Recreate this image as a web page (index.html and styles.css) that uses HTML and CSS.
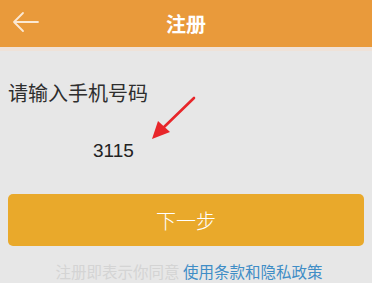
FILE: index.html
```html
<!DOCTYPE html>
<html lang="zh">
<head>
<meta charset="utf-8">
<link rel="stylesheet" href="styles.css">
</head>
<body>
<header class="topbar">
  <span class="back">
    <svg width="28" height="24" viewBox="0 0 28 24"><path d="M26 11H2M11 2L2 11L11 20" fill="none" stroke="#FBE9D4" stroke-width="1.8" stroke-linecap="round" stroke-linejoin="round"/></svg>
  </span>
  <h1 class="title">注册</h1>
</header>
<main class="content">
  <p class="label">请输入手机号码</p>
  <div class="number-row">
    <span class="number">3115</span>
    <svg class="pointer" width="50" height="46" viewBox="0 0 50 46"><path d="M45 3L14 33" stroke="#E8262A" stroke-width="2.6" stroke-linecap="round"/><polygon points="3,44 9,26 21,37" fill="#E8262A"/></svg>
  </div>
  <button class="next">下一步</button>
  <p class="terms"><span class="muted">注册即表示你同意</span> <a class="link">使用条款和隐私政策</a></p>
</main>
</body>
</html>
```
FILE: styles.css
```css
html, body {
  margin: 0;
  padding: 0;
  background: #E7E7E7;
  font-family: "Noto Sans CJK SC", "Liberation Sans", sans-serif;
  overflow: hidden;
}
.topbar {
  height: 47px;
  background: #E99A3B;
  border-bottom: 4px solid #EFE2D8;
  display: flex;
  align-items: center;
  justify-content: center;
  position: relative;
}
.back {
  position: absolute;
  left: 12px;
  top: 11px;
  display: flex;
}
.title {
  margin: 0;
  color: #FFFFFF;
  font-size: 20px;
  font-weight: 700;
  line-height: 1;
}
.content {
  padding: 0 8px;
}
.label {
  margin: 0;
  padding-top: 28px;
  font-size: 20px;
  line-height: 28px;
  color: #2E2E2E;
}
.number-row {
  position: relative;
  height: 46px;
  margin-top: 12px;
  padding-left: 85px;
  display: flex;
  align-items: center;
}
.number {
  font-family: "Liberation Sans", sans-serif;
  font-size: 19px;
  color: #222222;
  padding-top: 18px;
}
.pointer {
  position: absolute;
  left: 141px;
  top: -24px;
}
.next {
  display: block;
  width: 100%;
  height: 52px;
  margin-top: 29px;
  border: none;
  border-radius: 5px;
  background: #E9A92B;
  color: #FFFFFF;
  font-family: "Noto Sans CJK SC", sans-serif;
  font-size: 20px;
  font-weight: 300;
}
.terms {
  margin: 15px 0 0;
  text-align: center;
  font-size: 15.5px;
  line-height: 20px;
  padding-left: 6px;
}
.muted {
  color: #D4D4D4;
}
.link {
  color: #3F8DC6;
}
```
